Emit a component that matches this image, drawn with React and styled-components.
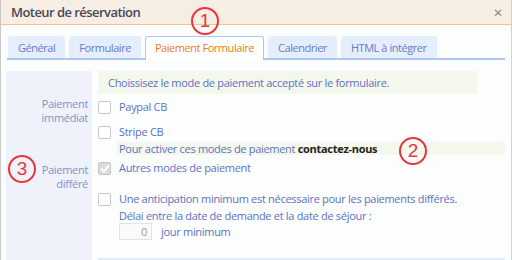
import styled, { createGlobalStyle } from 'styled-components';

const GlobalStyle = createGlobalStyle`
  body {
    margin: 0;
    background: #ffffff;
    font-family: "Open Sans", "Noto Sans", sans-serif;
  }
`;

const Window = styled.div`
  position: relative;
  width: 512px;
  height: 260px;
  box-sizing: border-box;
  overflow: hidden;
  background: #fcfdfd;
  border-left: 1px solid #c9c9c9;
  border-right: 1px solid #d2d2d2;
  letter-spacing: -0.3px;
`;

const TitleBar = styled.div`
  display: flex;
  align-items: center;
  justify-content: space-between;
  height: 24px;
  padding: 0 9px 0 10px;
  background: #f6ede4;
  border-bottom: 1px solid #f7c08a;
`;

const Title = styled.div`
  font-size: 13px;
  font-weight: 600;
  color: #444a55;
  letter-spacing: -0.55px;
`;

const Close = styled.span`
  font-size: 15px;
  color: #7a7a7a;
  line-height: 1;
`;

const TabBar = styled.div`
  display: flex;
  gap: 4px;
  margin: 11px 6px 0 6px;
  padding-left: 1px;
  border-bottom: 2px solid #a9c6f5;
`;

const Tab = styled.div`
  display: flex;
  align-items: center;
  height: 21px;
  padding: 0 9px;
  font-size: 11px;
  letter-spacing: -0.45px;
  border-radius: 3px 3px 0 0;
  background: ${(p) => (p.$active ? '#ffffff' : '#e5eefc')};
  color: ${(p) => (p.$active ? '#f07a22' : '#6a78c8')};
  border: 1px solid ${(p) => (p.$active ? '#a9c6f5' : 'transparent')};
  border-bottom: none;
  margin-bottom: ${(p) => (p.$active ? '-2px' : '0')};
  padding-bottom: ${(p) => (p.$active ? '2px' : '0')};
`;

const Body = styled.div`
  display: grid;
  grid-template-columns: 86px 1fr;
  gap: 6px;
  margin: 11px 0 0 5px;
  height: 189px;
`;

const Side = styled.div`
  background: #eff2fb;
  display: flex;
  flex-direction: column;
  align-items: flex-end;
  padding-right: 4px;
`;

const SideLabel = styled.div`
  text-align: right;
  font-size: 11px;
  line-height: 14px;
  color: #8292c9;
  margin-top: ${(p) => p.$top}px;
`;

const Main = styled.div`
  display: flex;
  flex-direction: column;
  font-size: 11px;
  color: #6070c3;
  padding-right: 6px;
`;

const Info = styled.div`
  display: flex;
  align-items: center;
  height: 23px;
  width: 379px;
  padding-left: 10px;
  box-sizing: border-box;
  background: #f3f7ec;
`;

const Row = styled.label`
  display: flex;
  align-items: flex-start;
  gap: 8px;
  margin-top: ${(p) => p.$top}px;
`;

const Box = styled.span`
  flex: none;
  width: 11px;
  height: 11px;
  border: 1px solid #c6c6c6;
  border-radius: 2px;
  background: ${(p) => (p.$checked ? '#dcdcdc' : '#ffffff')};
  display: flex;
  align-items: center;
  justify-content: center;
  margin-top: 1px;
`;

const Text = styled.div`
  line-height: 13px;
`;

const Note = styled.div`
  margin: 3px 0 0 -2px;
  padding-left: 2px;
  height: 13px;
  line-height: 13px;
  background: #f3f7ec;
  b {
    color: #222222;
    font-weight: 700;
  }
`;

const Sub = styled.div`
  margin-top: 3px;
  line-height: 13px;
`;

const InputRow = styled.div`
  display: flex;
  align-items: center;
  gap: 9px;
  margin-top: 1px;
`;

const NumInput = styled.div`
  width: 33px;
  height: 17px;
  box-sizing: border-box;
  border: 1px solid #e2e2e2;
  background: #fafafa;
  color: #999999;
  text-align: right;
  padding-right: 4px;
  line-height: 15px;
`;

const Indent = styled.div`
  padding-left: 21px;
`;

const BottomLine = styled.div`
  margin-top: auto;
  height: 2px;
  background: #e3eaf7;
`;

const Marker = styled.div`
  position: absolute;
  left: ${(p) => p.$x - 14}px;
  top: ${(p) => p.$y - 14}px;
  width: 24px;
  height: 24px;
  border: 2px solid #e8353a;
  border-radius: 50%;
  color: #e8353a;
  font-size: 19px;
  line-height: 24px;
  letter-spacing: 0;
  text-align: center;
  font-family: "Liberation Sans", Arial, sans-serif;
`;

const tabs = ['Général', 'Formulaire', 'Paiement Formulaire', 'Calendrier', 'HTML à intégrer'];

function Check() {
  return (
    <svg width="10" height="9" viewBox="0 0 10 9">
      <path d="M1 4.5 L4 7.5 L9 1.5" stroke="#ffffff" strokeWidth="2" fill="none" />
    </svg>
  );
}

export default function App() {
  return (
    <>
      <GlobalStyle />
      <Window>
        <TitleBar>
          <Title>Moteur de réservation</Title>
          <Close>×</Close>
        </TitleBar>
        <TabBar>
          {tabs.map((t, i) => (
            <Tab key={t} $active={i === 2}>{t}</Tab>
          ))}
        </TabBar>
        <Body>
          <Side>
            <SideLabel $top={26}>Paiement<br />immédiat</SideLabel>
            <SideLabel $top={38}>Paiement<br />différé</SideLabel>
          </Side>
          <Main>
            <Info>Choissisez le mode de paiement accepté sur le formulaire.</Info>
            <Row $top={6}>
              <Box />
              <Text>Paypal CB</Text>
            </Row>
            <Row $top={11}>
              <Box />
              <Text>Stripe CB</Text>
            </Row>
            <Indent>
              <Note>Pour activer ces modes de paiement <b>contactez-nous</b></Note>
            </Indent>
            <Row $top={6}>
              <Box $checked><Check /></Box>
              <Text>Autres modes de paiement</Text>
            </Row>
            <Row $top={17}>
              <Box />
              <Text>Une anticipation minimum est nécessaire pour les paiements différés.</Text>
            </Row>
            <Indent>
              <Sub>Délai entre la date de demande et la date de séjour :</Sub>
              <InputRow>
                <NumInput>0</NumInput>
                <span>jour minimum</span>
              </InputRow>
            </Indent>
            <BottomLine />
          </Main>
        </Body>
        <Marker $x={204} $y={21}>1</Marker>
        <Marker $x={412} $y={151}>2</Marker>
        <Marker $x={21} $y={169}>3</Marker>
      </Window>
    </>
  );
}
